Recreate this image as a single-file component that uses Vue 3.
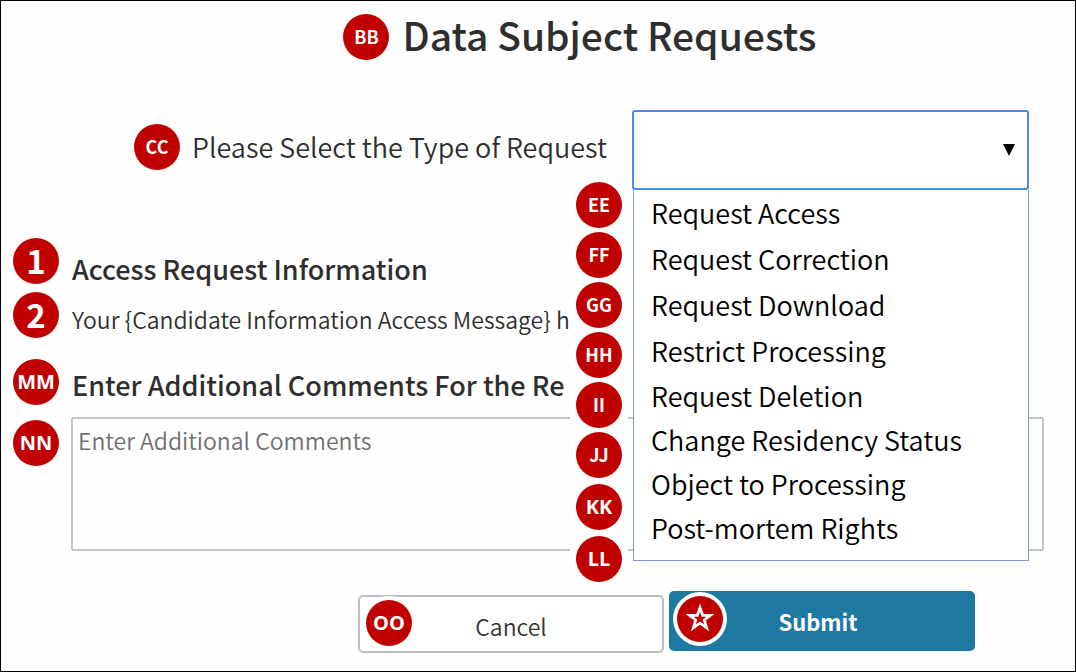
<script setup>
import { ref } from 'vue'

const selected = ref('')
const comments = ref('')

const requestTypes = [
  'Request Access',
  'Request Correction',
  'Request Download',
  'Restrict Processing',
  'Request Deletion',
  'Change Residency Status',
  'Object to Processing',
  'Post-mortem Rights',
]
const upperMarks = ['EE', 'FF', 'GG', 'HH', 'II', 'JJ']
const lowerMarks = ['KK', 'LL']
</script>

<template>
  <main class="page">
    <header class="title-row">
      <span class="badge">BB</span>
      <h1>Data Subject Requests</h1>
    </header>

    <div class="type-row">
      <div class="type-label">
        <span class="badge">CC</span>
        <label for="request-type">Please Select the Type of Request</label>
      </div>
      <div class="picker">
        <select id="request-type" v-model="selected">
          <option value=""></option>
          <option v-for="t in requestTypes" :key="t">{{ t }}</option>
        </select>
        <svg class="arrow" viewBox="0 0 12 12" aria-hidden="true"><path d="M0 0H12L6 12Z" /></svg>
        <ul class="menu" role="listbox" aria-label="Type of request">
          <li v-for="t in requestTypes" :key="t" role="option" @click="selected = t">{{ t }}</li>
        </ul>
        <div class="marks">
          <div class="marks-upper">
            <span v-for="m in upperMarks" :key="m" class="badge">{{ m }}</span>
          </div>
          <span v-for="m in lowerMarks" :key="m" class="badge large">{{ m }}</span>
        </div>
      </div>
    </div>

    <section class="details">
      <div class="line heading-line">
        <span class="badge number">1</span>
        <h2>Access Request Information</h2>
      </div>
      <div class="line message-line">
        <span class="badge number">2</span>
        <p>Your {Candidate Information Access Message} h</p>
      </div>
      <div class="line comments-line">
        <span class="badge large">MM</span>
        <h2><label for="comments">Enter Additional Comments For the Re</label></h2>
      </div>
      <div class="line field-line">
        <span class="badge large">NN</span>
        <textarea id="comments" v-model="comments" placeholder="Enter Additional Comments"></textarea>
      </div>
    </section>

    <footer class="actions">
      <div class="action">
        <button type="button" class="cancel">Cancel</button>
        <span class="badge large ring">OO</span>
      </div>
      <div class="action">
        <button type="submit" class="submit">Submit</button>
        <span class="badge ring wide">
          <svg class="star" viewBox="0 0 28 28" aria-hidden="true">
            <path d="M14 5L16.3 11.6H23.2L17.7 15.7L19.8 22.6L14 18.5L8.2 22.6L10.3 15.7L4.8 11.6H11.7Z" />
          </svg>
        </span>
      </div>
    </footer>
  </main>
</template>

<style>
body {
  margin: 0;
}
</style>

<style scoped>
.page {
  box-sizing: border-box;
  min-height: 100vh;
  border: 1px solid #000;
  background: #fefefe;
  color: #2e2e2e;
  font-family: "Noto Sans CJK SC", "Open Sans", sans-serif;
  font-weight: 350;
}
h1,
h2,
p,
ul {
  margin: 0;
  padding: 0;
}
.badge {
  box-sizing: border-box;
  flex: none;
  display: flex;
  align-items: center;
  justify-content: center;
  width: 46px;
  height: 46px;
  border-radius: 50%;
  background: #c00000;
  color: #fff;
  font-size: 18px;
  font-weight: 700;
  line-height: 24px;
  padding-bottom: 2px;
}
.badge.large {
  font-family: "Open Sans", sans-serif;
  font-size: 20px;
  padding-bottom: 0;
}
.badge.number {
  font-size: 33px;
}
.title-row {
  display: flex;
  justify-content: center;
  gap: 13px;
  padding: 13px 0 0 84px;
}
.title-row h1 {
  font-size: 39px;
  font-weight: 500;
  line-height: 40px;
}
.type-row {
  display: flex;
  justify-content: flex-end;
  gap: 25px;
  margin-top: 50px;
  padding: 0 46px 0 12px;
}
.type-label {
  display: flex;
  gap: 12px;
  margin-top: 14px;
  height: 46px;
  font-size: 27px;
  line-height: 46px;
  white-space: nowrap;
}
.picker {
  position: relative;
  flex: 0 1 397px;
}
select {
  display: block;
  box-sizing: border-box;
  appearance: none;
  width: 100%;
  height: 80px;
  padding: 0 40px 0 18px;
  border: 2px solid #4a8bec;
  border-radius: 3px;
  outline: none;
  background: #fff;
  color: #000;
  font: inherit;
  font-size: 27px;
}
.arrow {
  position: absolute;
  top: 34px;
  right: 14px;
  width: 12px;
  height: 12px;
}
.menu {
  position: absolute;
  z-index: 2;
  top: 80px;
  left: 1px;
  right: 0;
  padding: 0 0 10px;
  border: 1px solid #7c9bd0;
  border-top: 0;
  background: #fff;
  color: #000;
  font-size: 27px;
  list-style: none;
}
.menu li {
  height: 46px;
  padding-left: 17px;
  line-height: 46px;
}
.menu li:nth-child(n + 5) {
  height: 44px;
  line-height: 44px;
}
.marks {
  position: absolute;
  z-index: 1;
  top: 72px;
  left: -62px;
  display: flex;
  flex-direction: column;
  align-items: center;
  gap: 6px;
  padding: 0 6px;
  background: #fefefe;
}
.marks-upper {
  display: flex;
  flex-direction: column;
  gap: 4px;
}
.details {
  padding: 48px 31px 0 12px;
}
.line {
  display: flex;
  gap: 12px;
}
h2 {
  padding-left: 1px;
  font-size: 27px;
  font-weight: 500;
  line-height: 46px;
}
.heading-line h2 {
  padding-top: 8px;
}
.message-line p {
  padding: 4px 0 0 1px;
  font-size: 23px;
  line-height: 46px;
}
.comments-line {
  margin-top: 17px;
}
.comments-line h2 {
  padding-top: 3px;
}
.field-line {
  margin-top: 9px;
}
.field-line .badge {
  margin-top: 3px;
}
textarea {
  box-sizing: border-box;
  flex: 1;
  min-width: 0;
  height: 134px;
  padding: 5px;
  border: 2px solid #c4c4c4;
  border-radius: 2px;
  background: transparent;
  color: #333;
  font: inherit;
  font-size: 23px;
  line-height: 32px;
  resize: none;
}
textarea::placeholder {
  color: #707070;
  opacity: 1;
}
.actions {
  display: flex;
  justify-content: flex-end;
  align-items: flex-start;
  gap: 5px;
  margin-top: 40px;
  padding: 0 100px 18px 12px;
}
.action {
  position: relative;
  flex: 0 1 306px;
}
.action:first-child {
  margin-top: 4px;
}
button {
  display: block;
  box-sizing: border-box;
  width: 100%;
  height: 58px;
  padding: 4px 0 0;
  border: 2px solid #bdbdbd;
  border-radius: 5px;
  background: #fff;
  color: #333;
  font: inherit;
  font-size: 23px;
}
.submit {
  height: 60px;
  padding: 0 8px 0 0;
  border: 0;
  background: #1e789f;
  color: #fff;
  font-size: 22px;
  font-weight: 700;
}
.ring {
  position: absolute;
  top: 5px;
  left: 8px;
  box-shadow: 0 0 0 4px #fff;
}
.star {
  width: 32px;
  height: 32px;
  fill: none;
  stroke: #fff;
  stroke-width: 2.4;
}
</style>
